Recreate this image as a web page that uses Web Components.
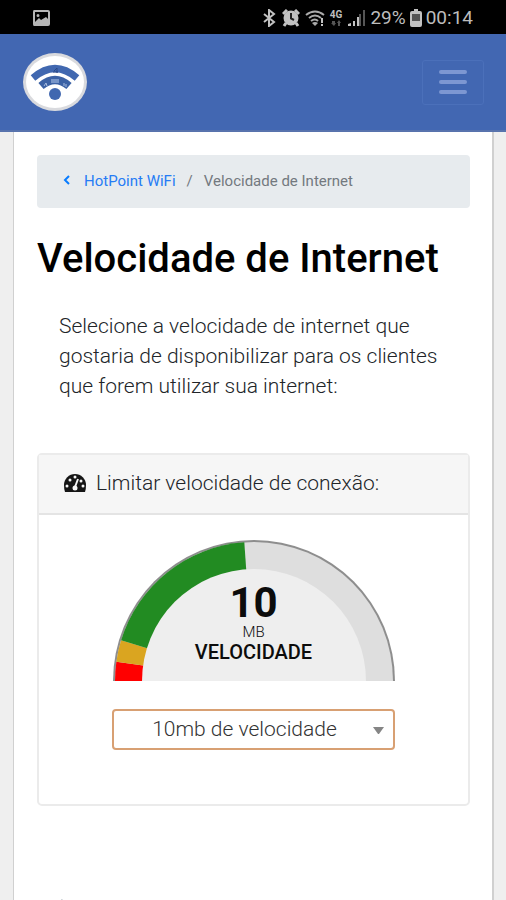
<!DOCTYPE html>
<html lang="pt-BR">
<head>
<meta charset="utf-8">
<meta name="viewport" content="width=device-width, initial-scale=1">
<title>Velocidade de Internet</title>
<style>
html{height:100%}
body{margin:0;min-height:100%;background:#efefef;font-family:Roboto,"Liberation Sans",sans-serif;color:#212529}
</style>
</head>
<body>
<hotpoint-app></hotpoint-app>
<script>
function define(name, html) {
  const template = document.createElement('template');
  template.innerHTML = '<style>*{box-sizing:border-box}svg{display:block;flex:none}</style>' + html;
  customElements.define(name, class extends HTMLElement {
    constructor() {
      super();
      this.attachShadow({mode: 'open'}).append(template.content.cloneNode(true));
    }
  });
}

define('status-bar', `
<style>
:host{display:flex;justify-content:space-between;align-items:center;height:34px;padding:2px 33px 0 32px;background:#000;color:#bdbdbd;font-size:19px;line-height:24px}
.right{display:flex;align-items:center}
.net{font-size:10px;font-weight:700;line-height:10px;margin:0 6px 0 4px;display:flex;flex-direction:column;align-items:center}
.pct{margin:0 4px 0 5px}
.time{margin-left:4px}
</style>
<svg width="19" height="17" viewBox="0 0 19 17"><path fill="#b5b5b5" fill-rule="evenodd" d="M2 0H16Q18 0 18 2V14Q18 16 16 16H2Q1 16 1 14V2Q1 0 2 0ZM3 2V12L7 8L9 10L14 7L16 9V2ZM6 4a1.500 1.500 0 1 1 0 3a1.500 1.500 0 1 1 0-3Z"/></svg>
<div class="right">
<svg width="13" height="18" viewBox="0 0 13 18"><path d="M1 5L11 13L6 17V1L11 5L1 13" fill="none" stroke="#c2c2c2" stroke-width="2"/></svg>
<svg width="18" height="18" viewBox="0 0 18 18" style="margin-left:6px"><path d="M1 5L5 1M17 5L13 1M4 14L2 17M14 14L16 17" stroke="#c2c2c2" stroke-width="3"/><circle cx="9" cy="9" r="7.500" fill="#c2c2c2"/><path d="M9 4V9.500L12 11" fill="none" stroke="#222" stroke-width="2"/></svg>
<svg width="21" height="17" viewBox="0 0 21 17" style="margin-left:5px"><g fill="none" stroke="#aaa" stroke-width="2"><path d="M1 5Q10-2 19 5M4 8Q10 3 16 8M6 11Q10 8 13 11"/></g><path d="M7 13L10 16L13 13Q10 11 7 13Z" fill="#aaa"/><path d="M17 8V13M17 14V16" stroke="#c2c2c2" stroke-width="2"/></svg>
<div class="net"><span>4G</span><svg width="10" height="6" viewBox="0 0 10 6"><path d="M1 1H4V3H5L3 6L0 3H1ZM7 6V3H6L8 0L10 3H9V6Z" fill="#555"/></svg></div>
<svg width="17" height="18" viewBox="0 0 17 18"><path d="M0 17V15L3 14V17ZM5 17V12H7V17ZM9 17V8H11V17Z" fill="#c2c2c2"/><path d="M11 17V5H13V17ZM15 17V1H17V17Z" fill="#555"/></svg>
<span class="pct">29%</span>
<svg width="12" height="18" viewBox="0 0 12 18"><path d="M4 0H8V2H10Q12 2 12 4V16Q12 18 10 18H2Q0 18 0 16V4Q0 2 2 2H4Z" fill="#c2c2c2"/><path d="M2 5H10V12H2Z" fill="#555"/></svg>
<span class="time">00:14</span>
</div>`);

define('nav-bar', `
<style>
:host{display:flex;justify-content:space-between;align-items:center;height:98px;padding:0 22px;background:#4267b2;border-bottom:2px solid #5873ad}
a{display:block}
button{display:flex;align-items:center;justify-content:center;width:62px;height:45px;padding:0;background:none;border:1px solid #4b70ba;border-radius:3px}
</style>
<a href="#" aria-label="HotPoint WiFi">
<svg width="66" height="60" viewBox="0 0 66 60"><ellipse cx="33" cy="30" rx="32" ry="29" fill="#d9dade"/><ellipse cx="33" cy="30" rx="29" ry="26" fill="#fff"/><g fill="none" stroke="#4168b0"><path d="M11 26Q33 7 55 26" stroke-width="7"/><path d="M19 34Q33 22 47 34" stroke-width="8" stroke="#3c62a5"/></g><circle cx="33" cy="42" r="6" fill="#4168b0"/><path d="M32 19L35 16V21M31 20H36" fill="none" stroke="#2b4988"/><path d="M29 27H37V31H29Z" fill="#7896c9"/><path d="M22 34L24 31L25 34M42 31V34M44 32V35" fill="none" stroke="#a9bde0"/></svg></a>
<button type="button" aria-label="Menu"><svg width="30" height="27" viewBox="0 0 30 27"><path d="M3 3H27M3 13H27M3 23H27" stroke="#7d97d2" stroke-width="4" stroke-linecap="round"/></svg></button>`);

define('bread-crumb', `
<style>
:host{display:block;background:#e7ebee;border-radius:4px;padding:16px 25px 17px}
nav{display:flex;align-items:center;font-size:15px;line-height:20px;color:#73797f}
a{display:flex;align-items:center;gap:13px;color:#267cf5;text-decoration:none}
.sep{margin:0 11px}
</style>
<nav aria-label="Navegação"><a href="#"><svg width="9" height="12" viewBox="0 0 9 12"><path d="M7 1L3 5L7 9" fill="none" stroke="#087cff" stroke-width="2"/></svg><slot name="parent"></slot></a><span class="sep">/</span><slot></slot></nav>`);

define('option-card', `
<style>
:host{display:block;border:2px solid #ebebeb;border-radius:5px;background:#fff}
header{display:flex;align-items:center;gap:9px;height:60px;padding:0 24px 2px;background:#f6f6f6;border-bottom:2px solid #e4e4e4;font-size:21px;line-height:30px;font-weight:300}
.body{display:flex;flex-direction:column;align-items:center;padding:25px 24px 54px}
</style>
<header><svg width="24" height="20" viewBox="0 0 24 20"><path d="M2 19Q1 16 1 12A11 11 0 0 1 23 12Q23 16 22 19Z" fill="#151515"/><g fill="#f6f6f6"><circle cx="4" cy="13" r="1.500"/><circle cx="7" cy="7" r="1.500"/><circle cx="12" cy="4" r="1.500"/><circle cx="20" cy="13" r="1.500"/><circle cx="18" cy="8" r="1.500"/></g><path d="M15 6L12 14" stroke="#f6f6f6" stroke-width="2"/><circle cx="12" cy="15" r="2.500" fill="#f6f6f6"/></svg><slot name="title"></slot></header>
<div class="body"><slot></slot></div>`);

define('speed-gauge', `
<style>
:host{display:grid;width:100%;max-width:282px}
svg,.label{grid-area:1/1}
svg{width:100%;height:auto}
.label{display:flex;flex-direction:column;align-items:center;padding-top:42px;color:#0c0c0c}
.value{font-size:42px;line-height:42px;font-weight:700}
.unit{font-size:15px;line-height:16px;font-weight:300}
.name{font-size:20px;line-height:24px;font-weight:500}
</style>
<svg viewBox="0 0 282 141"><path d="M0 141A141 141 0 0 1 282 141Z" fill="#8e8e8e"/><path d="M2 141A139 139 0 0 1 280 141Z" fill="#dedede"/><g id="arcs"></g><path d="M29 141A112 112 0 0 1 253 141Z" fill="#eee"/></svg>
<div class="label"><span class="value"><slot name="value"></slot></span><span class="unit"><slot name="unit"></slot></span><span class="name"><slot></slot></span></div>`);

define('speed-select', `
<style>
:host{display:grid;width:100%;max-width:283px;margin-top:28px;align-items:center}
select,svg{grid-area:1/1}
select{appearance:none;width:100%;height:41px;padding:0 18px 2px 0;border:2px solid #d8a073;border-radius:4px;outline:0;background:#fff;color:#333;font:300 21px/28px Roboto,"Liberation Sans",sans-serif;text-align:center;text-align-last:center}
svg{justify-self:end;margin-right:11px;pointer-events:none}
</style>
<select aria-label="Limitar velocidade de conexão"><option>10mb de velocidade</option></select>
<svg width="11" height="8" viewBox="0 0 11 8"><path d="M0 1H11L6 8H5Z" fill="#858585"/></svg>`);

define('hotpoint-app', `
<style>
:host{display:flex;flex-direction:column;height:100vh;overflow:hidden}
main{flex:1;min-height:0;overflow:hidden;margin:0 12px 0 13px;padding:23px 22px 0 23px;background:#fff;border:solid #d0d0d0;border-width:0 2px 0 1px}
h1{margin:26px 0 0;font-size:40px;line-height:50px;font-weight:500;color:#000}
p{margin:27px 22px 0;font-size:21px;line-height:30px;font-weight:300;color:#212529}
option-card{margin-top:52px}
footer{padding:93px 22px 0}
</style>
<status-bar></status-bar>
<nav-bar></nav-bar>
<main>
<bread-crumb><span slot="parent">HotPoint WiFi</span><span>Velocidade de Internet</span></bread-crumb>
<h1>Velocidade de Internet</h1>
<p>Selecione a velocidade de internet que gostaria de disponibilizar para os clientes que forem utilizar sua internet:</p>
<option-card><span slot="title">Limitar velocidade de conexão:</span>
<speed-gauge><span slot="value">10</span><span slot="unit">MB</span>VELOCIDADE</speed-gauge>
<speed-select></speed-select></option-card>
<footer><svg width="6" height="4" viewBox="0 0 6 4" aria-hidden="true"><path d="M0 4L3 0L5 4Z" fill="#8994a0"/></svg></footer>
</main>`);

const gauge = document.querySelector('hotpoint-app').shadowRoot.querySelector('speed-gauge');
const point = a => {
  const t = a * Math.PI / 180;
  return (141 - 139 * Math.cos(t)) + ' ' + (141 - 139 * Math.sin(t));
};
gauge.shadowRoot.getElementById('arcs').innerHTML = [[0, 8, '#f00'], [8, 17, '#daa520'], [17, 86, '#228b22']]
  .map(([from, to, color]) => '<path d="M141 141L' + point(from) + 'A139 139 0 0 1 ' + point(to) + 'Z" fill="' + color + '"/>').join('');
</script>
</body>
</html>
